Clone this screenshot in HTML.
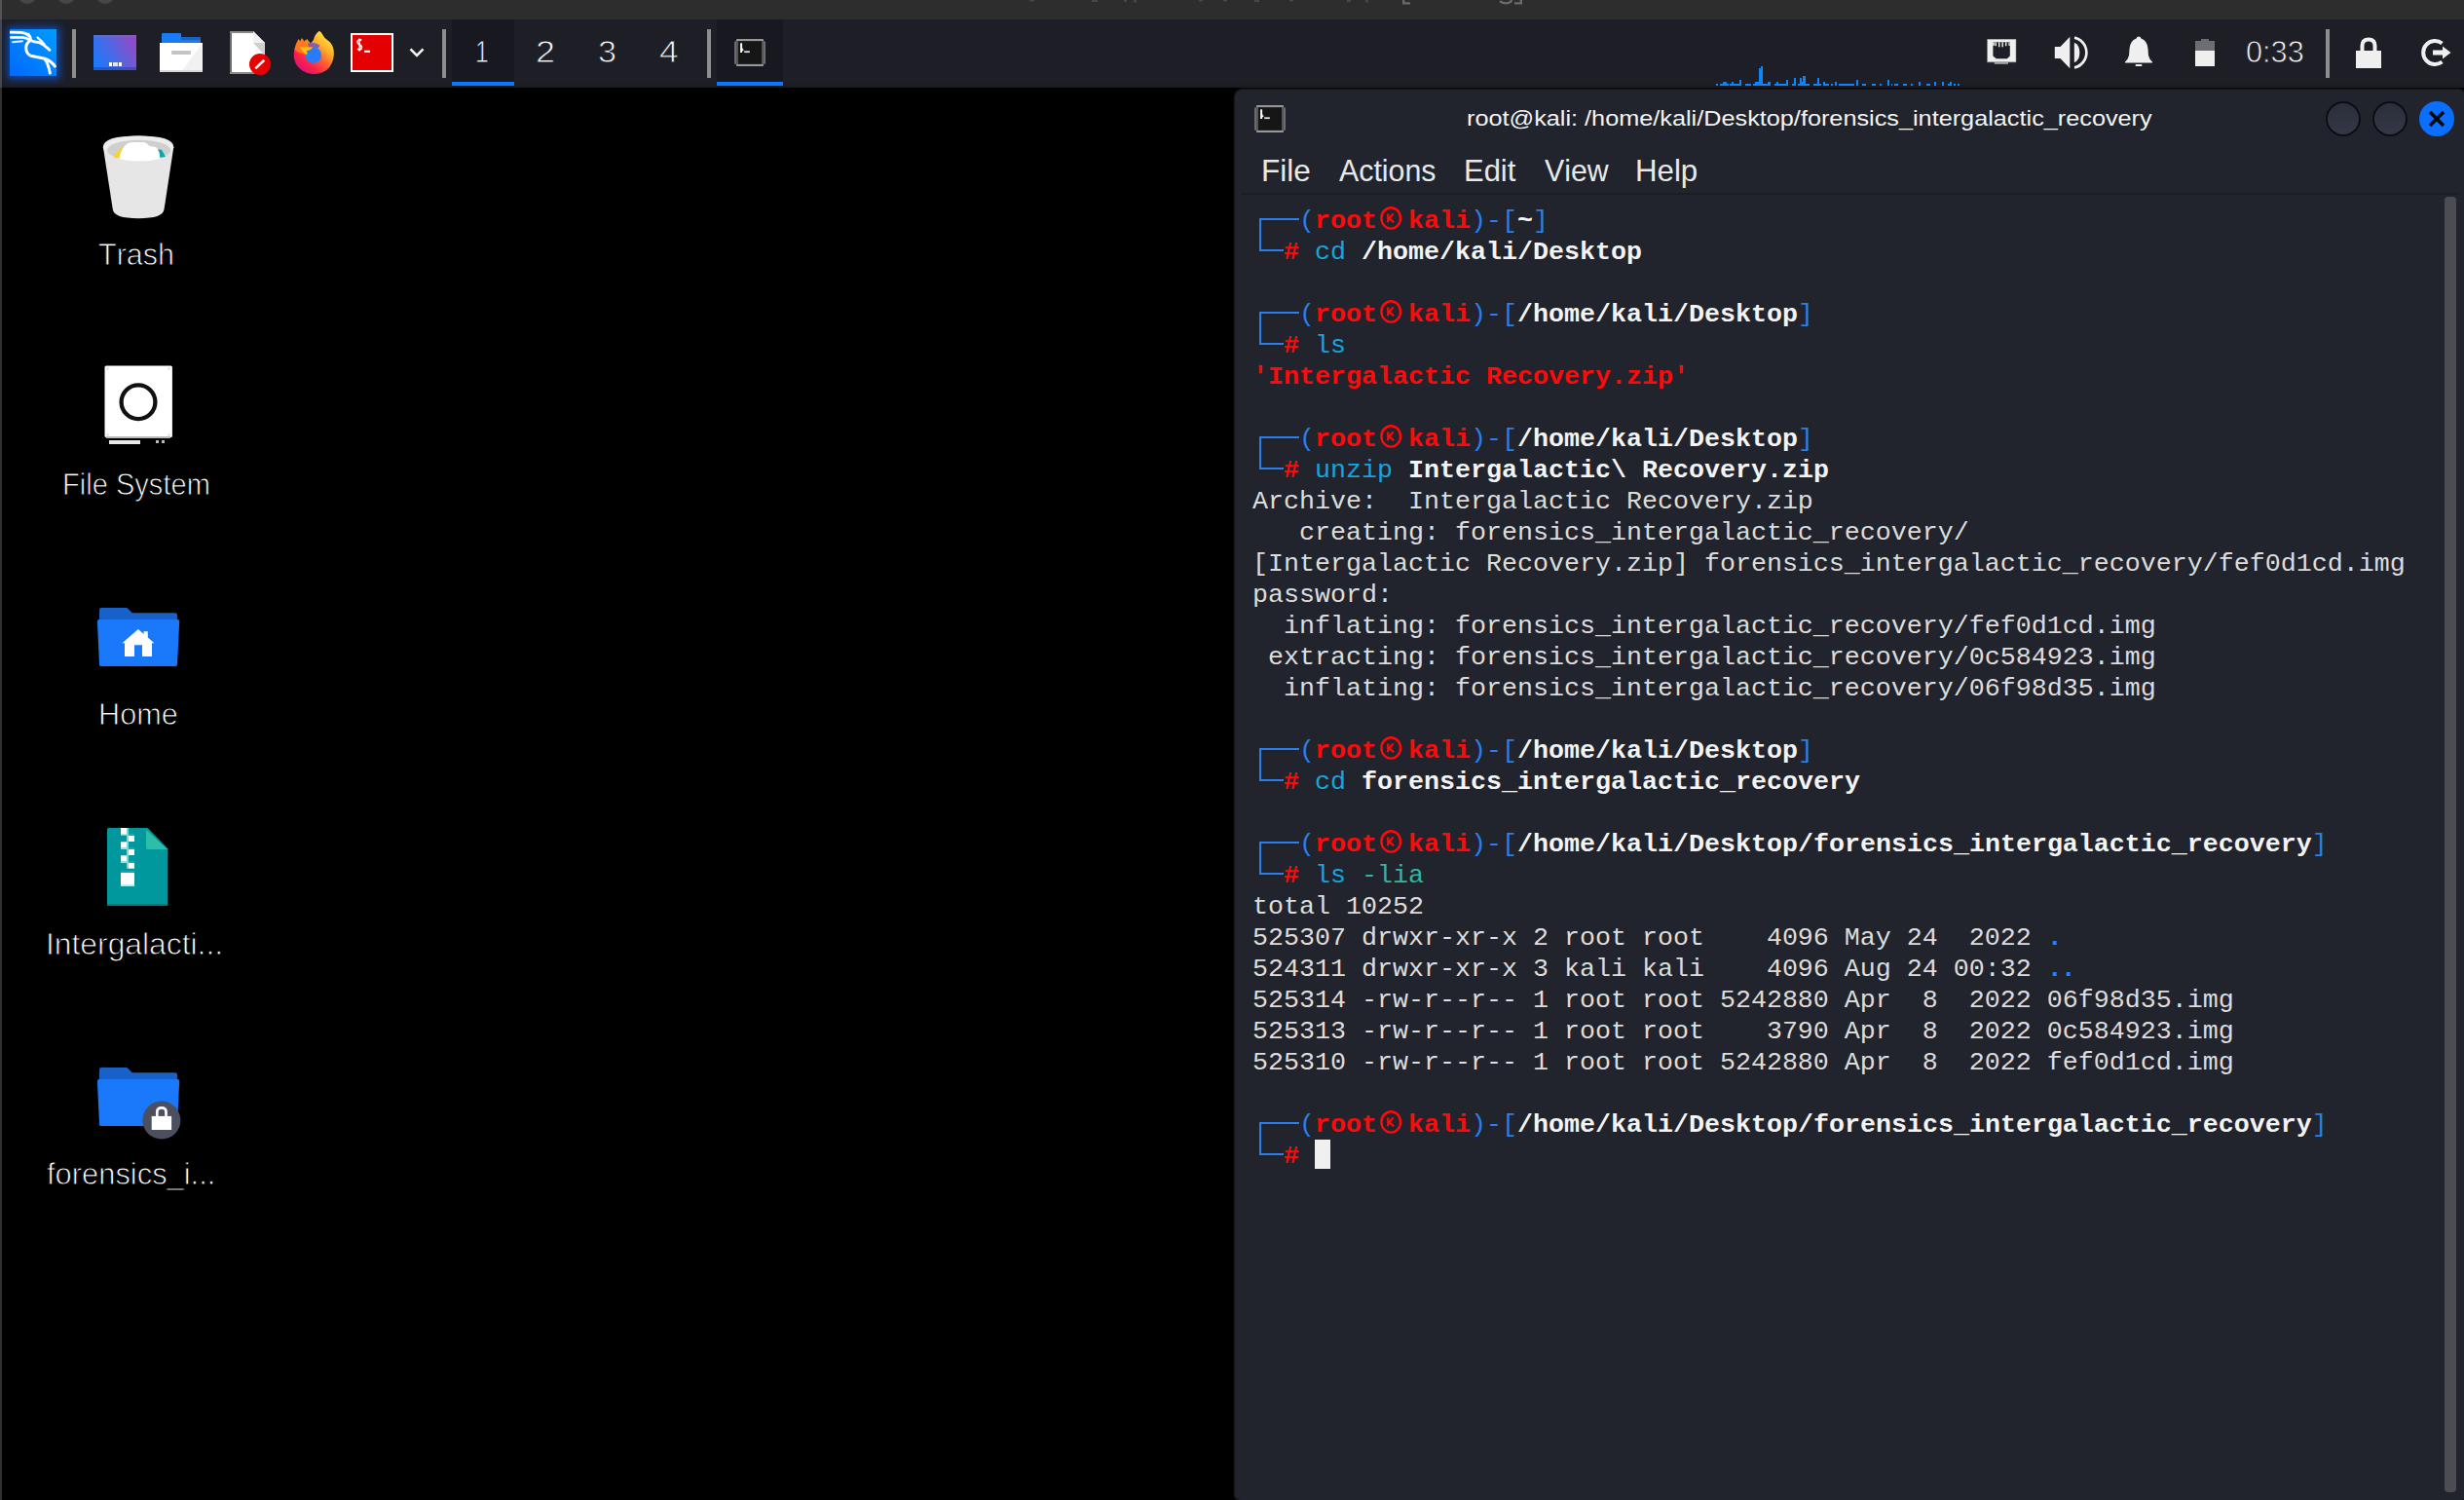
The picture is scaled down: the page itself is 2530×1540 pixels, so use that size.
<!DOCTYPE html><html><head><meta charset="utf-8"><title>kali</title><style>
*{margin:0;padding:0;box-sizing:border-box}
html,body{width:2530px;height:1540px;overflow:hidden;background:#000}
body{position:relative;font-family:"Liberation Sans",sans-serif;color:#fff;font-kerning:none}
.abs{position:absolute}
#topbar{left:0;top:0;width:2530px;height:20px;background:#2d2d2d}
#panel{left:0;top:20px;width:2530px;height:70px;background:linear-gradient(#1d1e26 0,#1d1e26 66px,#191a21 70px)}
#edge{left:0;top:0;width:2px;height:1540px;background:rgba(255,255,255,.19)}
.sep{width:4px;height:50px;top:30px;background:#8e8e8e}
.ws{top:20px;height:70px;width:64px;text-align:center;font-size:30px;line-height:66px;color:#f2f2f2}
.lbl{font-size:30px;line-height:36px;white-space:pre;color:#fff}
#win{left:1268px;top:92px;width:1262px;height:1448px;background:#21242d;border-radius:8px 5px 2px 6px;box-shadow:0 0 0 1.5px #121319}
.menu{top:160px;font-size:30px;line-height:36px;color:#e9e9e9;white-space:pre}
.row{left:1286px;height:32px;line-height:32px;font-family:"Liberation Mono",monospace;font-size:26.667px;white-space:pre;color:#dcdcdc;letter-spacing:0}
.b{font-weight:bold}
.r{color:#ff0a0a;font-weight:bold}
.bl{color:#2a7fe8}
.w{color:#f4f4f4;font-weight:bold}
.c{color:#17a3dc}
.g{color:#31b59f}
.d{color:#2b80ff;font-weight:bold}
.ln{background:#2a7fe8}
</style></head><body>
<div id="topbar" class="abs">
<div class="abs" style="left:18px;top:-16px;width:20px;height:20px;border-radius:50%;background:#464646"></div>
<div class="abs" style="left:58px;top:-16px;width:20px;height:20px;border-radius:50%;background:#464646"></div>
<div class="abs" style="left:98px;top:-16px;width:20px;height:20px;border-radius:50%;background:#464646"></div>
<svg class="abs" style="left:1040px;top:0" width="560" height="8" viewBox="0 0 560 8"><g fill="none" stroke="#6b6b6b" stroke-width="2.4"><path d="M401.2 0 L401.2 3.400 L408 3.400"/><path d="M522 3.400 L521.800 3.400 M515 3.400 L521.800 3.400 L521.800 0"/><path d="M500 1.200 Q505 4.800 510 2.500 Q512 1.500 512 0"/></g><g fill="#474747"><rect x="17" y="0" width="5" height="1.500"/><rect x="81" y="0" width="6" height="2"/><rect x="114" y="0" width="3" height="2"/><rect x="124" y="0" width="3" height="2.500"/><rect x="191" y="0" width="4" height="1.500"/><rect x="216" y="0" width="4" height="1.500"/><rect x="248" y="0" width="5" height="2"/><rect x="284" y="0" width="4" height="1.500"/><rect x="343" y="0" width="4" height="2"/><rect x="362" y="0" width="3" height="2.500"/></g></svg>
</div>
<div id="panel" class="abs"></div>
<div class="abs" style="left:10px;top:30px;width:48px;height:48px;background:linear-gradient(45deg,#0068ff 0%,#0082ff 50%,#009dff 100%);box-shadow:0 0 8px 2.500px rgba(10,92,225,.78)">
<svg width="48" height="48" viewBox="0 0 48 48" style="position:absolute;left:0;top:0">
<g fill="none" stroke="#fff" stroke-linecap="round" stroke-linejoin="round">
<path d="M1 3.200 L12 3.300 Q17 3.800 19.500 6.500" stroke-width="2.800"/>
<path d="M1.500 8.400 L13 8.300 Q17.500 8.800 20 10.800" stroke-width="2.800"/>
<path d="M3 13.200 L13 12.300" stroke-width="1.900" opacity=".9"/>
<path d="M19 5 Q21.500 8 21.500 11.500 Q25 13.200 30 13.500 Q34.500 15.500 41 21.300" stroke-width="2.900"/>
<path d="M28.500 8.500 L32.300 11.800 L36 16" stroke-width="2.200" opacity=".95"/>
<path d="M21.500 11.500 Q16.200 14.500 16.800 20 Q17.200 25.200 21.500 27.200 Q29 28.800 36 30.200 Q43 32.800 46.300 38" stroke-width="3.100"/>
<path d="M36 30.500 Q39.800 36 41.300 45" stroke-width="3"/>
</g></svg></div>
<div class="abs sep" style="left:74px"></div>
<div class="abs" style="left:96px;top:36px;width:44px;height:36px;background:linear-gradient(62deg,#157cff 0%,#4a69e6 45%,#7b55cf 75%,#9a46c6 100%)">
<div class="abs" style="left:0;top:0;width:44px;height:2px;background:rgba(120,120,160,.5)"></div>
<div class="abs" style="left:0;bottom:0;width:44px;height:3px;background:rgba(20,40,120,.35)"></div>
<div class="abs" style="left:16px;top:28px;width:3px;height:4px;background:#fff"></div>
<div class="abs" style="left:20px;top:28px;width:5px;height:4px;background:#dfe4fb"></div>
<div class="abs" style="left:26px;top:28px;width:3px;height:4px;background:#fff"></div>
</div>
<svg class="abs" style="left:162px;top:32px" width="48" height="44" viewBox="0 0 48 44">
<path d="M4 3 Q4 2 5 2 L23 2 Q24 2 24 3 L24 6 L43 6 Q44 6 44 7 L44 14 L4 14 Z" fill="#1a7cf5"/>
<path d="M24 6 L44 6 L44 9 L24 9Z" fill="#1463c8"/>
<rect x="2" y="12" width="44" height="30" fill="#fff"/>
<path d="M46 12 L46 42 L24 42 Z" fill="#f1f1f1"/>
<rect x="2" y="40" width="44" height="2" fill="#d9d9d9"/>
<rect x="14" y="20" width="20" height="4" rx="1" fill="#c4c4c4"/>
</svg>
<svg class="abs" style="left:234px;top:30px" width="48" height="50" viewBox="0 0 48 50">
<path d="M2 2 L26 2 L38 14 L38 46 L2 46 Z" fill="#fff"/>
<path d="M26 2 L38 14 L26 14 Z" fill="#f0f0f0"/>
<path d="M26 14 L38 14 L38 27 Z" fill="#cfcfcf"/>
<path d="M3 2 L3 46" stroke="#6f6f73" stroke-width="2"/>
<path d="M2 3 L26 3" stroke="#8a8a8a" stroke-width="2"/>
<path d="M2 45 L38 45" stroke="#8a8a8a" stroke-width="2"/>
<circle cx="33" cy="36" r="11" fill="#e60000"/>
<path d="M28.300 40.400 L37.300 31.700" stroke="#fff" stroke-width="2.600"/>
</svg>
<svg class="abs" style="left:298px;top:30px" width="50" height="50" viewBox="0 0 50 50">
<defs>
<linearGradient id="ffg" x1="0.9" y1="0.08" x2="0.2" y2="0.95"><stop offset="0" stop-color="#ffe650"/><stop offset=".28" stop-color="#ffb62a"/><stop offset=".55" stop-color="#ff5a35"/><stop offset=".8" stop-color="#fb1d4c"/><stop offset="1" stop-color="#d9127a"/></linearGradient>
</defs>
<path d="M29.800 1.800 Q32 2.500 33.500 6 Q35 9 38 11 Q43 14 44.600 21 Q46 31 40 39.500 Q33.500 46.500 24 46 Q12 45.500 6 36 Q2.500 29 4.300 21 Q5.500 15 8.500 10.300 Q9.800 11.500 10.300 13.200 Q10.600 10.500 11.800 9.200 Q13.500 10.500 14.200 12.800 Q15.500 11 17.600 10.300 Q18.500 12.500 20.500 14.300 Q23 13 24 10.500 Q25.500 5 29.800 1.800 Z" fill="url(#ffg)"/>
<path d="M4.300 21 Q5.500 15 8.500 10.300 Q9.800 11.500 10.300 13.200 Q10.600 10.500 11.800 9.200 Q13.500 10.500 14.200 12.800 Q15.500 11 17.600 10.300 Q18.500 12.500 20.500 14.300 L24 17 L17 26 Q9 25 4.300 21Z" fill="#ff8316" opacity=".8"/>
<circle cx="23.800" cy="26.600" r="8.300" fill="#2a7cf6"/>
<path d="M18 14.800 Q24 12.800 30.500 16.500 L28.500 19.500 Q23 17.800 19 18.800Z" fill="#6c57c9" opacity=".85"/>
<path d="M9.500 18.500 L23.500 18.500 Q21 21.500 16.500 22.500 Q18.500 24.500 16.500 26.500 Q13.500 23.500 9.500 18.500Z" fill="#ffc010"/>
</svg>
<div class="abs" style="left:360px;top:34px;width:44px;height:40px;background:#e40000;border:2px solid #fff">
<svg width="40" height="36" viewBox="0 0 40 36" style="position:absolute;left:0;top:0">
<path d="M9.300 5.300 Q7 4.200 5.300 6 Q4.500 8.500 7.200 9.800 Q10 11.200 9.200 13.800 Q7.500 15.600 5 14.300" fill="none" stroke="#fff" stroke-width="1.700"/>
<path d="M7.200 3.500 L7.200 16.500" stroke="#fff" stroke-width="1.400"/>
<rect x="12" y="15.800" width="6" height="2" fill="#fff"/>
</svg></div>
<svg class="abs" style="left:418px;top:46px" width="20" height="16" viewBox="0 0 20 16"><path d="M3.500 4.300 L10 10.800 L16.500 4.300" fill="none" stroke="#f2f2f2" stroke-width="2.600"/></svg>
<div class="abs sep" style="left:454px"></div>
<div class="abs" style="left:464px;top:20px;width:64px;height:70px;background:#171820"></div>
<div class="abs" style="left:464px;top:84px;width:64px;height:4px;background:#0a79ff"></div>
<div class="abs" style="left:487.96px;top:33.89px;font-size:31.5px;line-height:38px;white-space:pre;color:#f6f6f6;font-weight:normal;transform:scaleX(0.7809);transform-origin:0 0;-webkit-text-stroke:0.8px #171820;">1</div>
<div class="abs" style="left:549.91px;top:33.89px;font-size:31.5px;line-height:38px;white-space:pre;color:#f6f6f6;font-weight:normal;transform:scaleX(1.1373);transform-origin:0 0;-webkit-text-stroke:0.8px #1d1e26;">2</div>
<div class="abs" style="left:614.24px;top:33.89px;font-size:31.5px;line-height:38px;white-space:pre;color:#f6f6f6;font-weight:normal;transform:scaleX(1.0827);transform-origin:0 0;-webkit-text-stroke:0.8px #1d1e26;">3</div>
<div class="abs" style="left:677.09px;top:33.89px;font-size:31.5px;line-height:38px;white-space:pre;color:#f6f6f6;font-weight:normal;transform:scaleX(1.1253);transform-origin:0 0;-webkit-text-stroke:0.8px #1d1e26;">4</div>
<div class="abs sep" style="left:726px"></div>
<div class="abs" style="left:736px;top:20px;width:68px;height:70px;background:#171820"></div>
<div class="abs" style="left:736px;top:84px;width:68px;height:4px;background:#0a79ff"></div>
<svg class="abs" style="left:754px;top:40px" width="32" height="28" viewBox="0 0 32 28">
<rect x="0" y="2" width="32" height="24" rx="1.500" fill="#6b6b71"/>
<rect x="2" y="0" width="28" height="28" rx="1" fill="#989898"/>
<rect x="2" y="2" width="28" height="24" fill="#565656"/>
<rect x="4" y="2" width="24" height="24" fill="#161616"/>
<rect x="4" y="2" width="24" height="1.200" fill="#222"/><rect x="4" y="24.800" width="24" height="1.200" fill="#222"/>
<path d="M7.100 4.300 L7.100 14" stroke="#fff" stroke-width="2"/>
<path d="M8 9 L9.800 11.500 L8 12.500Z" fill="#e8e8e8"/>
<rect x="10.200" y="12.300" width="5.600" height="1.800" fill="#e0e0e0"/>
</svg>
<svg class="abs" style="left:1740px;top:50px" width="300" height="40" viewBox="0 0 300 40" shape-rendering="crispEdges"><rect x="22" y="36" width="2" height="2" fill="#0f84f7"/><rect x="26" y="36" width="3" height="2" fill="#0f84f7"/><rect x="29" y="34" width="4" height="4" fill="#0f84f7"/><rect x="33" y="36" width="2" height="2" fill="#0f84f7"/><rect x="36" y="36" width="2" height="2" fill="#0f84f7"/><rect x="38" y="34" width="2" height="4" fill="#0f84f7"/><rect x="40" y="36" width="6" height="2" fill="#0f84f7"/><rect x="46" y="32" width="2" height="6" fill="#0f84f7"/><rect x="52" y="36" width="6" height="2" fill="#0f84f7"/><rect x="60" y="36" width="2" height="2" fill="#0f84f7"/><rect x="62" y="34" width="4" height="4" fill="#0f84f7"/><rect x="66" y="20" width="2" height="18" fill="#0f84f7"/><rect x="68" y="18" width="2" height="20" fill="#0f84f7"/><rect x="70" y="36" width="5" height="2" fill="#0f84f7"/><rect x="75" y="34" width="3" height="4" fill="#0f84f7"/><rect x="82" y="36" width="2" height="2" fill="#0f84f7"/><rect x="84" y="34" width="2" height="4" fill="#0f84f7"/><rect x="86" y="36" width="8" height="2" fill="#0f84f7"/><rect x="94" y="32" width="2" height="6" fill="#0f84f7"/><rect x="100" y="36" width="2" height="2" fill="#0f84f7"/><rect x="102" y="30" width="2" height="8" fill="#0f84f7"/><rect x="106" y="36" width="2" height="2" fill="#0f84f7"/><rect x="108" y="30" width="2" height="8" fill="#0f84f7"/><rect x="110" y="34" width="1" height="4" fill="#0f84f7"/><rect x="111" y="28" width="3" height="10" fill="#0f84f7"/><rect x="114" y="36" width="4" height="2" fill="#0f84f7"/><rect x="122" y="36" width="4" height="2" fill="#0f84f7"/><rect x="126" y="30" width="2" height="8" fill="#0f84f7"/><rect x="128" y="36" width="2" height="2" fill="#0f84f7"/><rect x="132" y="34" width="2" height="4" fill="#0f84f7"/><rect x="134" y="36" width="4" height="2" fill="#0f84f7"/><rect x="140" y="36" width="2" height="2" fill="#0f84f7"/><rect x="144" y="34" width="2" height="4" fill="#0f84f7"/><rect x="148" y="36" width="16" height="2" fill="#0f84f7"/><rect x="166" y="32" width="2" height="6" fill="#0f84f7"/><rect x="172" y="36" width="4" height="2" fill="#0f84f7"/><rect x="182" y="36" width="4" height="2" fill="#0f84f7"/><rect x="190" y="36" width="2" height="2" fill="#0f84f7"/><rect x="198" y="32" width="2" height="6" fill="#0f84f7"/><rect x="202" y="36" width="1" height="2" fill="#0f84f7"/><rect x="205" y="36" width="4" height="2" fill="#0f84f7"/><rect x="214" y="36" width="4" height="2" fill="#0f84f7"/><rect x="222" y="36" width="2" height="2" fill="#0f84f7"/><rect x="230" y="34" width="2" height="4" fill="#0f84f7"/><rect x="238" y="36" width="4" height="2" fill="#0f84f7"/><rect x="246" y="34" width="2" height="4" fill="#0f84f7"/><rect x="254" y="34" width="2" height="4" fill="#0f84f7"/><rect x="260" y="36" width="2" height="2" fill="#0f84f7"/><rect x="262" y="34" width="2" height="4" fill="#0f84f7"/><rect x="266" y="36" width="2" height="2" fill="#0f84f7"/><rect x="270" y="36" width="2" height="2" fill="#0f84f7"/></svg>
<svg class="abs" style="left:2040px;top:40px" width="31" height="27" viewBox="0 0 31 27">
<rect x="0.500" y="0.200" width="29.500" height="23.600" fill="#efefef"/>
<rect x="0.500" y="0.200" width="29.500" height="23.600" fill="none" stroke="#85858a" stroke-width="1" opacity=".55"/>
<path d="M6.400 3.300 L23.800 3.300 L23.800 17.400 L20.900 20.300 L9.800 20.300 L6.400 17.400Z" fill="#1d1e26"/>
<path d="M9.200 3.300 L9.200 7.200 M12.700 3.300 L12.700 8.200 M16.200 3.300 L16.200 8.200 M19.700 3.300 L19.700 7.200" stroke="#e4e4e4" stroke-width="1.500"/>
<path d="M6.400 3.300 L6.400 6.500 L7.400 6.500 L7.400 3.300 M22.800 3.300 L22.800 6.500 L23.800 6.500 L23.800 3.300" stroke="#e4e4e4" stroke-width="1"/>
<rect x="7.800" y="23.800" width="14.200" height="2" fill="#a2a2a6"/>
</svg>
<svg class="abs" style="left:2108px;top:36px" width="38" height="36" viewBox="0 0 38 36">
<path d="M1.800 12 L7.500 12 L17.300 1.800 L17.300 34.200 L7.500 24 L1.800 24 Z" fill="#efefef"/>
<path d="M21.800 7.800 Q24.500 8.800 26.300 12 Q28.400 18 26.300 24 Q24.500 27.200 21.800 28.200Z" fill="#efefef"/>
<path d="M22 2.600 Q29 4 32.800 11 Q36 18 32.800 25 Q29 32 22 33.400" fill="none" stroke="#efefef" stroke-width="2.700"/>
</svg>
<svg class="abs" style="left:2180px;top:36px" width="32" height="34" viewBox="0 0 32 34">
<path d="M16 1.5 Q18 1.5 18.5 3.500 Q25 6 25.500 14 L26 21 Q27 25 30 27.5 L30 28.500 L2 28.500 L2 27.5 Q5 25 6 21 L6.500 14 Q7 6 13.500 3.500 Q14 1.5 16 1.500Z" fill="#efefef"/>
<rect x="12.500" y="30" width="7" height="2" rx="1" fill="#efefef"/>
</svg>
<svg class="abs" style="left:2252px;top:38px" width="24" height="32" viewBox="0 0 24 32">
<rect x="8" y="2" width="8" height="3" fill="#6d6d72"/>
<rect x="2" y="4" width="20" height="10" fill="#6d6d72"/>
<rect x="2" y="14" width="20" height="16" fill="#efefef"/>
</svg>
<div class="abs" style="left:2305.77px;top:33.69px;font-size:31.5px;line-height:38px;white-space:pre;color:#f6f6f6;font-weight:normal;transform:scaleX(0.9737);transform-origin:0 0;-webkit-text-stroke:0.8px #1d1e26;">0:33</div>
<div class="abs sep" style="left:2388px"></div>
<svg class="abs" style="left:2416px;top:36px" width="32" height="36" viewBox="0 0 32 36">
<path d="M9.500 17 L9.500 11 Q9.500 4.500 16 4.500 Q22.500 4.500 22.500 11 L22.500 17" fill="none" stroke="#efefef" stroke-width="4"/>
<rect x="3" y="16" width="26" height="18" fill="#efefef"/>
</svg>
<svg class="abs" style="left:2484px;top:38px" width="36" height="32" viewBox="0 0 36 32">
<path d="M23.500 6.500 A12 12 0 1 0 23.500 25.500" fill="none" stroke="#efefef" stroke-width="4"/>
<path d="M14 13.500 L24 13.500 L24 9.500 L32.500 16 L24 22.500 L24 18.500 L14 18.500Z" fill="#efefef"/>
</svg>
<svg class="abs" style="left:104px;top:136px" width="76" height="90" viewBox="0 0 76 90">
<path d="M1.9 15 Q1.9 3.6 38.1 3.6 Q74.3 3.6 74.3 15 L64.500 79 Q63.500 88.200 38.100 88.200 Q12.800 88.200 11.800 79 Z" fill="#e6e6e6"/>
<ellipse cx="38.1" cy="15.2" rx="36.200" ry="11.600" fill="#ededed"/>
<ellipse cx="38.6" cy="18.2" rx="32.600" ry="10.400" fill="#cfcfcf"/>
<path d="M5.8 19 Q8 27.500 38.600 28.800 Q69 27.500 71.300 19 L71.300 24 L60 33 L17 33 L5.800 24Z" fill="#e6e6e6"/>
<path d="M12 24 L21.800 13.500 L23 26.200 L14.500 26.200Z" fill="#f5d33a"/>
<path d="M56.500 17.500 L62 17.800 L66 25 L58 26.200Z" fill="#12a3a6"/>
<path d="M18.500 27 Q19.500 19 24 14 Q27 10.200 33 10 L43.500 10 Q47 10.500 49.500 14 L56 15 Q60.500 19 60.300 27 Q50 29.500 39 29.500 Q27 29.500 18.500 27Z" fill="#fff"/>
</svg>
<svg class="abs" style="left:104px;top:372px" width="76" height="88" viewBox="0 0 76 88">
<rect x="3.500" y="3.500" width="69.400" height="73.500" rx="1.500" fill="#fff"/><rect x="5" y="76" width="66" height="2" fill="#b9b9b9"/>
<circle cx="38" cy="40.700" r="17.400" fill="none" stroke="#111" stroke-width="4.300"/>
<circle cx="6.500" cy="6.500" r="1" fill="#ccc"/><circle cx="69.500" cy="6.500" r="1" fill="#ccc"/><circle cx="6.500" cy="74.500" r="1" fill="#ccc"/><circle cx="69.500" cy="74.500" r="1" fill="#ccc"/>
<rect x="8" y="80" width="32" height="4" fill="#eaeaea"/>
<rect x="56" y="80" width="3" height="3" fill="#bbb"/><rect x="62" y="80" width="3" height="3" fill="#bbb"/>
</svg>
<svg class="abs" style="left:97px;top:621px" width="92" height="80" viewBox="0 0 92 80">
<path d="M5 5 Q5 3.100 7 3.100 L32.500 3.100 Q33.800 3.100 34.800 4.200 L38.600 8.300 L83 8.300 Q85 8.300 85 10.300 L85 22 L5 22Z" fill="#1761c9"/>
<path d="M2.900 17 Q2.900 15.100 4.900 15.100 L85.200 15.100 Q87.200 15.100 87.200 17 L85 61.200 Q85 63.100 83 63.100 L7 63.100 Q5 63.100 5 61.200Z" fill="#1a79fa"/>
<path d="M44.900 25 L50.600 29.900 L50.600 27.200 L54.800 27.200 L54.800 33.500 L61.500 39.200 L59 39.200 L59 52.900 L49 52.900 L49 41.300 L41 41.300 L41 52.900 L31 52.900 L31 39.200 L28.500 39.200Z" fill="#fff"/></svg>
<svg class="abs" style="left:108px;top:848px" width="68" height="86" viewBox="0 0 68 86">
<path d="M2 3.500 Q2 2 3.500 2 L43.700 2 L64.300 23.300 L64.300 80.500 Q64.300 82 62.800 82 L3.500 82 Q2 82 2 80.500Z" fill="#00979d"/>
<path d="M2 80 L64.300 80 L64.300 80.500 Q64.300 82 62.800 82 L3.500 82 Q2 82 2 80.500Z" fill="#007c82"/>
<path d="M42 3.700 L63.700 24 L43.500 24 Q42 24 42 22.500Z" fill="#2bbfaa"/>
<rect x="22" y="2" width="2" height="41.700" fill="#86d3d2"/>
<g fill="#fff"><rect x="16" y="2" width="6" height="6"/><rect x="16" y="16.300" width="6" height="6"/><rect x="16" y="30.300" width="6" height="6"/>
<rect x="24" y="10" width="6" height="6"/><rect x="24" y="24" width="6" height="6"/><rect x="24" y="38" width="6" height="5.700"/>
<rect x="16" y="48" width="14" height="13.700"/></g>
<g fill="#bfe6e6"><rect x="16" y="8" width="6" height="1.600"/><rect x="16" y="22.300" width="6" height="1.600"/><rect x="16" y="36.300" width="6" height="1.600"/><rect x="16" y="60.200" width="14" height="1.500"/></g>
<g fill="#12acb0"><rect x="24" y="8" width="6" height="2"/><rect x="24" y="22" width="6" height="2"/><rect x="24" y="36" width="6" height="2"/><rect x="16" y="46" width="14" height="2"/></g>
</svg>
<svg class="abs" style="left:97px;top:1093px" width="92" height="80" viewBox="0 0 92 80">
<path d="M5 5 Q5 3.100 7 3.100 L32.500 3.100 Q33.800 3.100 34.800 4.200 L38.600 8.300 L83 8.300 Q85 8.300 85 10.300 L85 22 L5 22Z" fill="#1761c9"/>
<path d="M2.900 17 Q2.900 15.100 4.900 15.100 L85.200 15.100 Q87.200 15.100 87.200 17 L85 61.200 Q85 63.100 83 63.100 L7 63.100 Q5 63.100 5 61.200Z" fill="#1a79fa"/>
<circle cx="68.900" cy="57.100" r="19.500" fill="#4b4f5e"/><path d="M64.300 54 L64.300 48.500 Q64.300 44.300 68.900 44.300 Q73.500 44.300 73.500 48.500 L73.500 54" fill="none" stroke="#fff" stroke-width="2.700"/><rect x="58.700" y="52.900" width="20.400" height="14.100" fill="#fff"/></svg>
<div class="abs" style="left:101.09px;top:241.91px;font-size:32px;line-height:38px;white-space:pre;color:#fff;font-weight:normal;transform:scaleX(0.9535);transform-origin:0 0;-webkit-text-stroke:0.9px #000;">Trash</div>
<div class="abs" style="left:63.67px;top:477.91px;font-size:32px;line-height:38px;white-space:pre;color:#fff;font-weight:normal;transform:scaleX(0.9086);transform-origin:0 0;-webkit-text-stroke:0.9px #000;">File System</div>
<div class="abs" style="left:101.25px;top:713.91px;font-size:32px;line-height:38px;white-space:pre;color:#fff;font-weight:normal;transform:scaleX(0.9584);transform-origin:0 0;-webkit-text-stroke:0.9px #000;">Home</div>
<div class="abs" style="left:46.84px;top:949.91px;font-size:32px;line-height:38px;white-space:pre;color:#fff;font-weight:normal;transform:scaleX(0.9939);transform-origin:0 0;-webkit-text-stroke:0.9px #000;">Intergalacti...</div>
<div class="abs" style="left:47.54px;top:1185.91px;font-size:32px;line-height:38px;white-space:pre;color:#fff;font-weight:normal;transform:scaleX(0.9650);transform-origin:0 0;-webkit-text-stroke:0.9px #000;">forensics_i...</div>
<div id="win" class="abs"></div>
<svg class="abs" style="left:1288px;top:108px" width="32" height="28" viewBox="0 0 32 28">
<rect x="0" y="2" width="32" height="24" rx="1.500" fill="#6b6b71"/>
<rect x="2" y="0" width="28" height="28" rx="1" fill="#989898"/>
<rect x="2" y="2" width="28" height="24" fill="#565656"/>
<rect x="4" y="2" width="24" height="24" fill="#161616"/>
<rect x="4" y="2" width="24" height="1.200" fill="#222"/><rect x="4" y="24.800" width="24" height="1.200" fill="#222"/>
<path d="M7.100 4.300 L7.100 14" stroke="#fff" stroke-width="2"/>
<path d="M8 9 L9.800 11.500 L8 12.500Z" fill="#e8e8e8"/>
<rect x="10.200" y="12.300" width="5.600" height="1.800" fill="#e0e0e0"/>
</svg>
<div class="abs" style="left:1506.36px;top:107.70px;font-size:22.5px;line-height:27px;white-space:pre;color:#f4f4f4;font-weight:normal;transform:scaleX(1.1225);transform-origin:0 0;">root@kali: /home/kali/Desktop/forensics_intergalactic_recovery</div>
<div class="abs" style="left:2388px;top:104px;width:36px;height:36px;border-radius:50%;background:linear-gradient(#2b2f3b,#343846);border:2px solid #0d0e13"></div>
<div class="abs" style="left:2436px;top:104px;width:36px;height:36px;border-radius:50%;background:linear-gradient(#2b2f3b,#343846);border:2px solid #0d0e13"></div>
<div class="abs" style="left:2484px;top:104px;width:36px;height:36px;border-radius:50%;background:#0a6ffd"></div>
<svg class="abs" style="left:2484px;top:104px" width="36" height="36" viewBox="0 0 36 36"><path d="M11 11 L25 25 M25 11 L11 25" stroke="#05070c" stroke-width="3.600"/></svg>
<div class="abs" style="left:1294.98px;top:156.53px;font-size:30.5px;line-height:37px;white-space:pre;color:#e9e9e9;font-weight:normal;transform:scaleX(1.0333);transform-origin:0 0;">File</div>
<div class="abs" style="left:1374.50px;top:156.53px;font-size:30.5px;line-height:37px;white-space:pre;color:#e9e9e9;font-weight:normal;transform:scaleX(0.9942);transform-origin:0 0;">Actions</div>
<div class="abs" style="left:1503.12px;top:156.53px;font-size:30.5px;line-height:37px;white-space:pre;color:#e9e9e9;font-weight:normal;transform:scaleX(1.0147);transform-origin:0 0;">Edit</div>
<div class="abs" style="left:1586.05px;top:156.53px;font-size:30.5px;line-height:37px;white-space:pre;color:#e9e9e9;font-weight:normal;transform:scaleX(0.9920);transform-origin:0 0;">View</div>
<div class="abs" style="left:1679.20px;top:156.53px;font-size:30.5px;line-height:37px;white-space:pre;color:#e9e9e9;font-weight:normal;transform:scaleX(1.0234);transform-origin:0 0;">Help</div>
<div class="abs" style="left:1274px;top:198px;width:1250px;height:2px;background:#1b1d25"></div>
<div class="abs" style="left:2510px;top:202px;width:12px;height:1330px;border-radius:4px;background:#4b4d53"></div>
<div class="abs row" style="top:211px"><span class="bl">   (</span><span class="r">root</span><span class="r" style="display:inline-block;width:32px"> </span><span class="r">kali</span><span class="bl">)-[</span><span class="w">~</span><span class="bl">]</span></div>
<div class="abs row" style="top:243px"><span class="r">  #</span> <span class="c">cd</span> <span class="w">/home/kali/Desktop</span></div>
<div class="abs row" style="top:307px"><span class="bl">   (</span><span class="r">root</span><span class="r" style="display:inline-block;width:32px"> </span><span class="r">kali</span><span class="bl">)-[</span><span class="w">/home/kali/Desktop</span><span class="bl">]</span></div>
<div class="abs row" style="top:339px"><span class="r">  #</span> <span class="c">ls</span></div>
<div class="abs row" style="top:371px"><span class="r">'Intergalactic Recovery.zip'</span></div>
<div class="abs row" style="top:435px"><span class="bl">   (</span><span class="r">root</span><span class="r" style="display:inline-block;width:32px"> </span><span class="r">kali</span><span class="bl">)-[</span><span class="w">/home/kali/Desktop</span><span class="bl">]</span></div>
<div class="abs row" style="top:467px"><span class="r">  #</span> <span class="c">unzip</span> <span class="w">Intergalactic\ Recovery.zip</span></div>
<div class="abs row" style="top:499px">Archive:  Intergalactic Recovery.zip</div>
<div class="abs row" style="top:531px">   creating: forensics_intergalactic_recovery/</div>
<div class="abs row" style="top:563px">[Intergalactic Recovery.zip] forensics_intergalactic_recovery/fef0d1cd.img</div>
<div class="abs row" style="top:595px">password: </div>
<div class="abs row" style="top:627px">  inflating: forensics_intergalactic_recovery/fef0d1cd.img</div>
<div class="abs row" style="top:659px"> extracting: forensics_intergalactic_recovery/0c584923.img</div>
<div class="abs row" style="top:691px">  inflating: forensics_intergalactic_recovery/06f98d35.img</div>
<div class="abs row" style="top:755px"><span class="bl">   (</span><span class="r">root</span><span class="r" style="display:inline-block;width:32px"> </span><span class="r">kali</span><span class="bl">)-[</span><span class="w">/home/kali/Desktop</span><span class="bl">]</span></div>
<div class="abs row" style="top:787px"><span class="r">  #</span> <span class="c">cd</span> <span class="w">forensics_intergalactic_recovery</span></div>
<div class="abs row" style="top:851px"><span class="bl">   (</span><span class="r">root</span><span class="r" style="display:inline-block;width:32px"> </span><span class="r">kali</span><span class="bl">)-[</span><span class="w">/home/kali/Desktop/forensics_intergalactic_recovery</span><span class="bl">]</span></div>
<div class="abs row" style="top:883px"><span class="r">  #</span> <span class="c">ls</span> <span class="g">-lia</span></div>
<div class="abs row" style="top:915px">total 10252</div>
<div class="abs row" style="top:947px">525307 drwxr-xr-x 2 root root    4096 May 24  2022 <span class="d">.</span></div>
<div class="abs row" style="top:979px">524311 drwxr-xr-x 3 kali kali    4096 Aug 24 00:32 <span class="d" style="letter-spacing:-2px">..</span></div>
<div class="abs row" style="top:1011px">525314 -rw-r--r-- 1 root root 5242880 Apr  8  2022 06f98d35.img</div>
<div class="abs row" style="top:1043px">525313 -rw-r--r-- 1 root root    3790 Apr  8  2022 0c584923.img</div>
<div class="abs row" style="top:1075px">525310 -rw-r--r-- 1 root root 5242880 Apr  8  2022 fef0d1cd.img</div>
<div class="abs row" style="top:1139px"><span class="bl">   (</span><span class="r">root</span><span class="r" style="display:inline-block;width:32px"> </span><span class="r">kali</span><span class="bl">)-[</span><span class="w">/home/kali/Desktop/forensics_intergalactic_recovery</span><span class="bl">]</span></div>
<div class="abs row" style="top:1171px"><span class="r">  #</span> </div>
<div class="abs ln" style="left:1293px;top:224px;width:41px;height:2px"></div>
<div class="abs ln" style="left:1293px;top:224px;width:2px;height:33px"></div>
<div class="abs ln" style="left:1293px;top:256px;width:25px;height:2px"></div>
<svg class="abs" style="left:1414px;top:208px" width="32" height="32" viewBox="0 0 32 32"><ellipse cx="14.2" cy="15.900" rx="9.800" ry="10.700" fill="none" stroke="#ff0a0a" stroke-width="2.4"/><path d="M11.200 11.600 L11.200 20.300 M16.600 11.600 L12.200 16.100 L17.200 20.300" fill="none" stroke="#ff0a0a" stroke-width="2.100"/></svg>
<div class="abs ln" style="left:1293px;top:320px;width:41px;height:2px"></div>
<div class="abs ln" style="left:1293px;top:320px;width:2px;height:33px"></div>
<div class="abs ln" style="left:1293px;top:352px;width:25px;height:2px"></div>
<svg class="abs" style="left:1414px;top:304px" width="32" height="32" viewBox="0 0 32 32"><ellipse cx="14.2" cy="15.900" rx="9.800" ry="10.700" fill="none" stroke="#ff0a0a" stroke-width="2.4"/><path d="M11.200 11.600 L11.200 20.300 M16.600 11.600 L12.200 16.100 L17.200 20.300" fill="none" stroke="#ff0a0a" stroke-width="2.100"/></svg>
<div class="abs ln" style="left:1293px;top:448px;width:41px;height:2px"></div>
<div class="abs ln" style="left:1293px;top:448px;width:2px;height:33px"></div>
<div class="abs ln" style="left:1293px;top:480px;width:25px;height:2px"></div>
<svg class="abs" style="left:1414px;top:432px" width="32" height="32" viewBox="0 0 32 32"><ellipse cx="14.2" cy="15.900" rx="9.800" ry="10.700" fill="none" stroke="#ff0a0a" stroke-width="2.4"/><path d="M11.200 11.600 L11.200 20.300 M16.600 11.600 L12.200 16.100 L17.200 20.300" fill="none" stroke="#ff0a0a" stroke-width="2.100"/></svg>
<div class="abs ln" style="left:1293px;top:768px;width:41px;height:2px"></div>
<div class="abs ln" style="left:1293px;top:768px;width:2px;height:33px"></div>
<div class="abs ln" style="left:1293px;top:800px;width:25px;height:2px"></div>
<svg class="abs" style="left:1414px;top:752px" width="32" height="32" viewBox="0 0 32 32"><ellipse cx="14.2" cy="15.900" rx="9.800" ry="10.700" fill="none" stroke="#ff0a0a" stroke-width="2.4"/><path d="M11.200 11.600 L11.200 20.300 M16.600 11.600 L12.200 16.100 L17.200 20.300" fill="none" stroke="#ff0a0a" stroke-width="2.100"/></svg>
<div class="abs ln" style="left:1293px;top:864px;width:41px;height:2px"></div>
<div class="abs ln" style="left:1293px;top:864px;width:2px;height:33px"></div>
<div class="abs ln" style="left:1293px;top:896px;width:25px;height:2px"></div>
<svg class="abs" style="left:1414px;top:848px" width="32" height="32" viewBox="0 0 32 32"><ellipse cx="14.2" cy="15.900" rx="9.800" ry="10.700" fill="none" stroke="#ff0a0a" stroke-width="2.4"/><path d="M11.200 11.600 L11.200 20.300 M16.600 11.600 L12.200 16.100 L17.200 20.300" fill="none" stroke="#ff0a0a" stroke-width="2.100"/></svg>
<div class="abs ln" style="left:1293px;top:1152px;width:41px;height:2px"></div>
<div class="abs ln" style="left:1293px;top:1152px;width:2px;height:33px"></div>
<div class="abs ln" style="left:1293px;top:1184px;width:25px;height:2px"></div>
<svg class="abs" style="left:1414px;top:1136px" width="32" height="32" viewBox="0 0 32 32"><ellipse cx="14.2" cy="15.900" rx="9.800" ry="10.700" fill="none" stroke="#ff0a0a" stroke-width="2.4"/><path d="M11.200 11.600 L11.200 20.300 M16.600 11.600 L12.200 16.100 L17.200 20.300" fill="none" stroke="#ff0a0a" stroke-width="2.100"/></svg>
<div class="abs" style="left:1350px;top:1170px;width:16px;height:30px;background:#f0f0f0"></div>
<div id="edge" class="abs"></div>
</body></html>
